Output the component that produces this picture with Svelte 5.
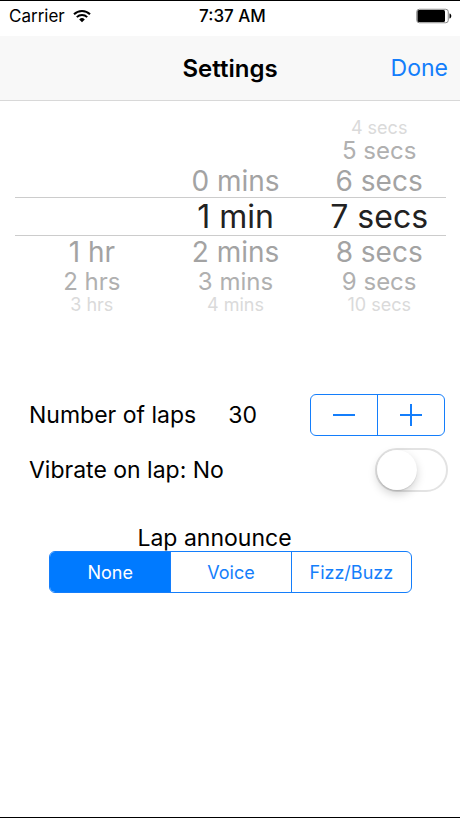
<script>
  const hours = ['', '1 hr', '2 hrs', '3 hrs', '4 hrs', '5 hrs'];
  const minutes = [];
  const seconds = [];
  for (let i = 0; i < 60; i++) {
    minutes.push(i === 1 ? '1 min' : `${i} mins`);
    seconds.push(i === 1 ? '1 sec' : `${i} secs`);
  }

  const offsets = [-3, -2, -1, 0, 1, 2, 3];
  const announceOptions = ['None', 'Voice', 'Fizz/Buzz'];

  let wheels = $state([
    { name: 'Hours', values: hours, selected: 0 },
    { name: 'Minutes', values: minutes, selected: 1 },
    { name: 'Seconds', values: seconds, selected: 7 },
  ]);
  let laps = $state(30);
  let vibrate = $state(false);
  let announce = $state('None');
</script>

<div class="screen">
  <div class="status">
    <div class="carrier">
      <span>Carrier</span>
      <svg width="18" height="14" viewBox="0 0 18 14" aria-hidden="true">
        <path d="M1 5.2a11.5 11.5 0 0 1 16 0" />
        <path d="M3.8 8.1a7.5 7.5 0 0 1 10.4 0" />
        <path class="dot" d="M9 13.2 6.2 10.4a4 4 0 0 1 5.6 0z" />
      </svg>
    </div>
    <span class="time">7:37 AM</span>
    <svg class="battery" width="36" height="16" viewBox="0 0 36 16" aria-hidden="true">
      <rect class="case" x="0.75" y="1.25" width="31.5" height="13.5" rx="2.5" />
      <rect x="1.5" y="2" width="27.5" height="12" rx="1.5" />
      <path d="M33.5 5.5c2.4.6 2.4 4.4 0 5z" />
    </svg>
  </div>

  <header>
    <h1>Settings</h1>
    <button type="button" class="done">Done</button>
  </header>

  <main>
    <div class="picker">
      {#each wheels as wheel}
        <div class="wheel" role="group" aria-label={wheel.name}>
          {#each offsets as offset}
            {@const value = wheel.values[wheel.selected + offset]}
            <div class="slot near{Math.abs(offset)}">
              {#if value}
                <button type="button" onclick={() => (wheel.selected += offset)}>{value}</button>
              {/if}
            </div>
          {/each}
        </div>
      {/each}
    </div>

    <div class="row laps">
      <span>Number of laps</span>
      <output>{laps}</output>
      <div class="stepper">
        <button type="button" aria-label="Fewer laps" onclick={() => (laps = Math.max(1, laps - 1))}>
          <svg width="22" height="22" viewBox="0 0 22 22"><path d="M0 11h22" /></svg>
        </button>
        <button type="button" aria-label="More laps" onclick={() => (laps += 1)}>
          <svg width="22" height="22" viewBox="0 0 22 22"><path d="M0 11h22M11 0v22" /></svg>
        </button>
      </div>
    </div>

    <div class="row vibrate">
      <label for="vibrate">Vibrate on lap: {vibrate ? 'Yes' : 'No'}</label>
      <input id="vibrate" type="checkbox" role="switch" bind:checked={vibrate} />
    </div>

    <fieldset>
      <legend>Lap announce</legend>
      <div class="segments">
        {#each announceOptions as option}
          <label class:active={announce === option}>
            <input type="radio" name="announce" value={option} bind:group={announce} />
            {option}
          </label>
        {/each}
      </div>
    </fieldset>
  </main>
</div>

<style>
  :global(body) {
    margin: 0;
    background: #fff;
  }

  .screen {
    box-sizing: border-box;
    min-height: 100vh;
    border-top: 1px solid #000;
    border-bottom: 1px solid #000;
    font-family: Inter, 'Liberation Sans', sans-serif;
    font-size: 23px;
    color: #000;
  }

  button {
    padding: 0;
    border: none;
    background: none;
    font: inherit;
    color: inherit;
    cursor: pointer;
  }

  .status {
    display: grid;
    grid-template-columns: 1fr auto 1fr;
    align-items: center;
    height: 30px;
    padding: 0 8px 5px 9px;
    font-size: 17px;
  }

  .carrier {
    display: flex;
    align-items: center;
    gap: 8px;
  }

  .carrier path {
    fill: none;
    stroke: #000;
    stroke-width: 2;
  }

  .carrier .dot {
    fill: #000;
    stroke: none;
  }

  .time {
    padding-left: 4px;
    font-weight: 500;
  }

  .battery {
    justify-self: end;
  }

  .battery .case {
    fill: none;
    stroke: #888;
    stroke-width: 1;
  }

  header {
    display: grid;
    grid-template-columns: 1fr auto 1fr;
    align-items: center;
    height: 64px;
    padding: 0 12px;
    border-bottom: 1px solid #d8d8d8;
    background: #f8f8f8;
  }

  h1 {
    grid-column: 2;
    margin: 0;
    font-size: 24px;
    font-weight: 600;
  }

  .done {
    justify-self: end;
    color: #147efb;
  }

  .picker {
    display: grid;
    grid-template-columns: repeat(3, 1fr);
    margin: 18px 14px 0 15px;
  }

  .slot {
    display: flex;
    justify-content: center;
    align-items: center;
    padding-left: 10px;
    white-space: nowrap;
  }

  .near0 {
    height: 37px;
    border-top: 1px solid #ccc;
    border-bottom: 1px solid #ccc;
    font-size: 32px;
    line-height: 37px;
    color: #222;
  }

  .near1 {
    height: 32px;
    font-size: 28px;
    line-height: 32px;
    color: #a3a3a3;
  }

  .near2 {
    height: 28px;
    font-size: 24px;
    line-height: 28px;
    color: #b0b0b0;
  }

  .near3 {
    height: 18px;
    font-size: 18px;
    line-height: 18px;
    color: #dadada;
  }

  .row {
    display: flex;
    align-items: center;
    padding-left: 29px;
  }

  .laps {
    margin-top: 80px;
    padding-right: 15px;
  }

  .laps output {
    margin-left: 32px;
  }

  .stepper {
    box-sizing: border-box;
    display: flex;
    width: 135px;
    height: 42px;
    margin-left: auto;
    border: 1px solid #147efb;
    border-radius: 6px;
  }

  .stepper button {
    display: flex;
    flex: 1;
    justify-content: center;
    align-items: center;
  }

  .stepper button + button {
    border-left: 1px solid #147efb;
  }

  .stepper path {
    stroke: #147efb;
    stroke-width: 2;
  }

  .vibrate {
    margin-top: 12px;
    padding-right: 12px;
  }

  .vibrate input {
    box-sizing: border-box;
    width: 73px;
    height: 44px;
    margin: 0 0 0 auto;
    border: 2px solid #e3e3e3;
    border-radius: 22px;
    background: #fff;
    appearance: none;
    cursor: pointer;
  }

  .vibrate input::before {
    content: '';
    display: block;
    width: 40px;
    height: 40px;
    border-radius: 50%;
    background: #fff;
    box-shadow: 0 4px 10px rgba(0, 0, 0, 0.18), 0 1px 1px rgba(0, 0, 0, 0.1);
  }

  .vibrate input:checked {
    border-color: #4cd964;
    background: #4cd964;
  }

  .vibrate input:checked::before {
    margin-left: auto;
  }

  fieldset {
    min-width: 0;
    margin: 33px 48px 0 49px;
    padding: 0;
    border: none;
  }

  legend {
    margin: 0 auto;
    padding: 0 32px 0 0;
    line-height: 26px;
  }

  .segments {
    box-sizing: border-box;
    display: grid;
    grid-template-columns: repeat(3, 1fr);
    height: 42px;
    border: 1px solid #147efb;
    border-radius: 6px;
    overflow: hidden;
  }

  .segments label {
    display: flex;
    justify-content: center;
    align-items: center;
    font-size: 18px;
    color: #147efb;
    cursor: pointer;
  }

  .segments label + label {
    border-left: 1px solid #147efb;
  }

  .segments .active {
    background: #007aff;
    color: #fff;
  }

  .segments input {
    width: 0;
    height: 0;
    margin: 0;
    appearance: none;
  }
</style>
